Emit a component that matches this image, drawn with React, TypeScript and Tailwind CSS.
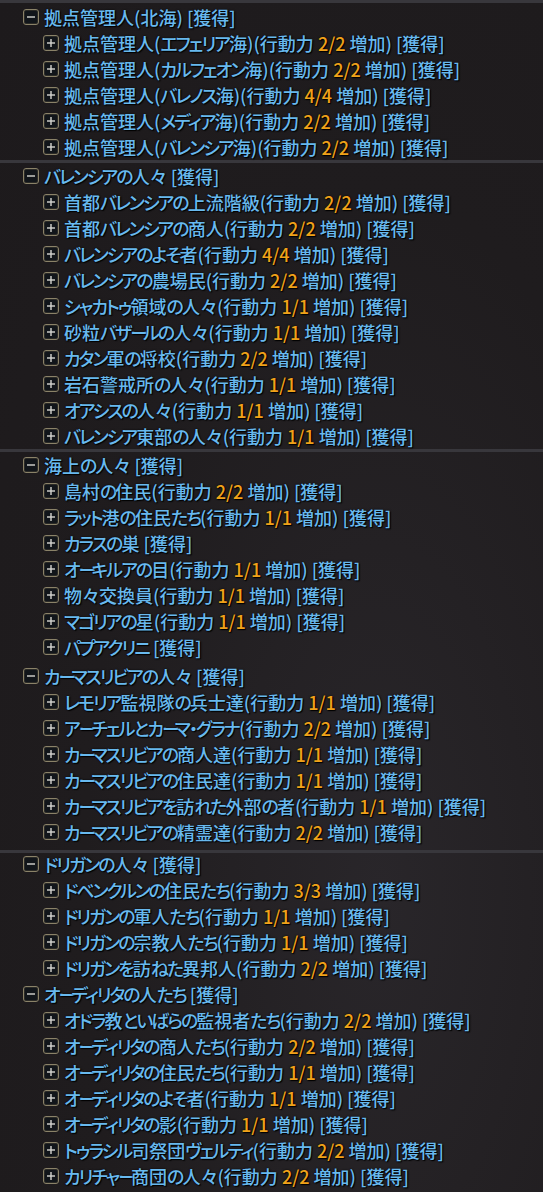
import type { ReactNode } from 'react';

type Child = { name: string; ap?: string };
type Group = { name: string; items: Child[]; className?: string; separator?: boolean };

const groups: Group[] = [
  {
    name: '拠点管理人(北海)',
    className: 'mt-px',
    separator: true,
    items: [
      { name: '拠点管理人(エフェリア海)', ap: '2/2' },
      { name: '拠点管理人(カルフェオン海)', ap: '2/2' },
      { name: '拠点管理人(バレノス海)', ap: '4/4' },
      { name: '拠点管理人(メディア海)', ap: '2/2' },
      { name: '拠点管理人(バレンシア海)', ap: '2/2' },
    ],
  },
  {
    name: 'バレンシアの人々',
    separator: true,
    items: [
      { name: '首都バレンシアの上流階級', ap: '2/2' },
      { name: '首都バレンシアの商人', ap: '2/2' },
      { name: 'バレンシアのよそ者', ap: '4/4' },
      { name: 'バレンシアの農場民', ap: '2/2' },
      { name: 'シャカトゥ領域の人々', ap: '1/1' },
      { name: '砂粒バザールの人々', ap: '1/1' },
      { name: 'カタン軍の将校', ap: '2/2' },
      { name: '岩石警戒所の人々', ap: '1/1' },
      { name: 'オアシスの人々', ap: '1/1' },
      { name: 'バレンシア東部の人々', ap: '1/1' },
    ],
  },
  {
    name: '海上の人々',
    items: [
      { name: '島村の住民', ap: '2/2' },
      { name: 'ラット港の住民たち', ap: '1/1' },
      { name: 'カラスの巣' },
      { name: 'オーキルアの目', ap: '1/1' },
      { name: '物々交換員', ap: '1/1' },
      { name: 'マゴリアの星', ap: '1/1' },
      { name: 'パプアクリニ' },
    ],
  },
  {
    name: 'カーマスリビアの人々',
    className: 'mt-[3px] pb-[5px]',
    separator: true,
    items: [
      { name: 'レモリア監視隊の兵士達', ap: '1/1' },
      { name: 'アーチェルとカーマ・グラナ', ap: '2/2' },
      { name: 'カーマスリビアの商人達', ap: '1/1' },
      { name: 'カーマスリビアの住民達', ap: '1/1' },
      { name: 'カーマスリビアを訪れた外部の者', ap: '1/1' },
      { name: 'カーマスリビアの精霊達', ap: '2/2' },
    ],
  },
  {
    name: 'ドリガンの人々',
    className: '-mt-[2px]',
    items: [
      { name: 'ドベンクルンの住民たち', ap: '3/3' },
      { name: 'ドリガンの軍人たち', ap: '1/1' },
      { name: 'ドリガンの宗教人たち', ap: '1/1' },
      { name: 'ドリガンを訪ねた異邦人', ap: '2/2' },
    ],
  },
  {
    name: 'オーディリタの人たち',
    items: [
      { name: 'オドラ教といばらの監視者たち', ap: '2/2' },
      { name: 'オーディリタの商人たち', ap: '2/2' },
      { name: 'オーディリタの住民たち', ap: '1/1' },
      { name: 'オーディリタのよそ者', ap: '1/1' },
      { name: 'オーディリタの影', ap: '1/1' },
      { name: 'トゥラシル司祭団ヴェルティ', ap: '2/2' },
      { name: 'カリチャー商団の人々', ap: '2/2' },
    ],
  },
];

// the game font sets kana (and the long vowel mark most of all) narrower than kanji
function Jp({ text }: { text: string }) {
  const parts = text.split(/(ー|[\u3040-\u30fb\u30fd-\u30ff]+)/);
  return (
    <>
      {parts.map((p, i) => {
        if (i % 2 === 0) return p;
        return (
          <span key={i} className={p === 'ー' ? 'tracking-[-5px]' : 'tracking-[-2px]'}>
            {p}
          </span>
        );
      })}
    </>
  );
}

function ToggleBox({ open }: { open: boolean }) {
  return (
    <span className="flex h-4 w-4 shrink-0 items-center justify-center rounded-[3px] border border-[#8a8268] bg-[#11151a] shadow-[inset_0_0_0_1px_#2b2a26]">
      <svg width="10" height="10" viewBox="0 0 10 10">
        <path d="M1 5h8" stroke="#d6d6d2" strokeWidth="1.4" />
        {!open && <path d="M5 1v8" stroke="#d6d6d2" strokeWidth="1.4" />}
      </svg>
    </span>
  );
}

function Row({ indent, open, children }: { indent: boolean; open: boolean; children: ReactNode }) {
  return (
    <div className={`flex h-[26px] items-center gap-[5px] ${indent ? 'pl-[43px]' : 'pl-[23px]'}`}>
      <ToggleBox open={open} />
      <span className="whitespace-nowrap text-[18px] font-medium leading-none text-[#68b9ee] [font-feature-settings:'palt'] [text-shadow:0_0_2px_#000,1px_1px_1px_#000]">
        {children}
      </span>
    </div>
  );
}

export default function App() {
  return (
    <div
      className="h-[1192px] w-[543px] overflow-hidden bg-[radial-gradient(ellipse_at_70%_75%,#29262a_0%,#1f1c1e_55%,#1d1a1c_100%)]"
      style={{ fontFamily: '"Noto Sans CJK JP", "Noto Sans", sans-serif' }}
    >
      <div className="h-[3px] bg-[#38373c]" />
      {groups.map((g) => (
        <div key={g.name}>
          <div className={g.className}>
            <Row indent={false} open>
              <Jp text={g.name} /> [獲得]
            </Row>
            {g.items.map((c) => (
              <Row key={c.name} indent open={false}>
                <Jp text={c.name} />
                {c.ap ? (
                  <>
                    (行動力 <span className="text-[#f0a21a]">{c.ap}</span> 増加) [獲得]
                  </>
                ) : (
                  <> [獲得]</>
                )}
              </Row>
            ))}
          </div>
          {g.separator && <div className="h-[3px] bg-[#38373c]" />}
        </div>
      ))}
    </div>
  );
}
